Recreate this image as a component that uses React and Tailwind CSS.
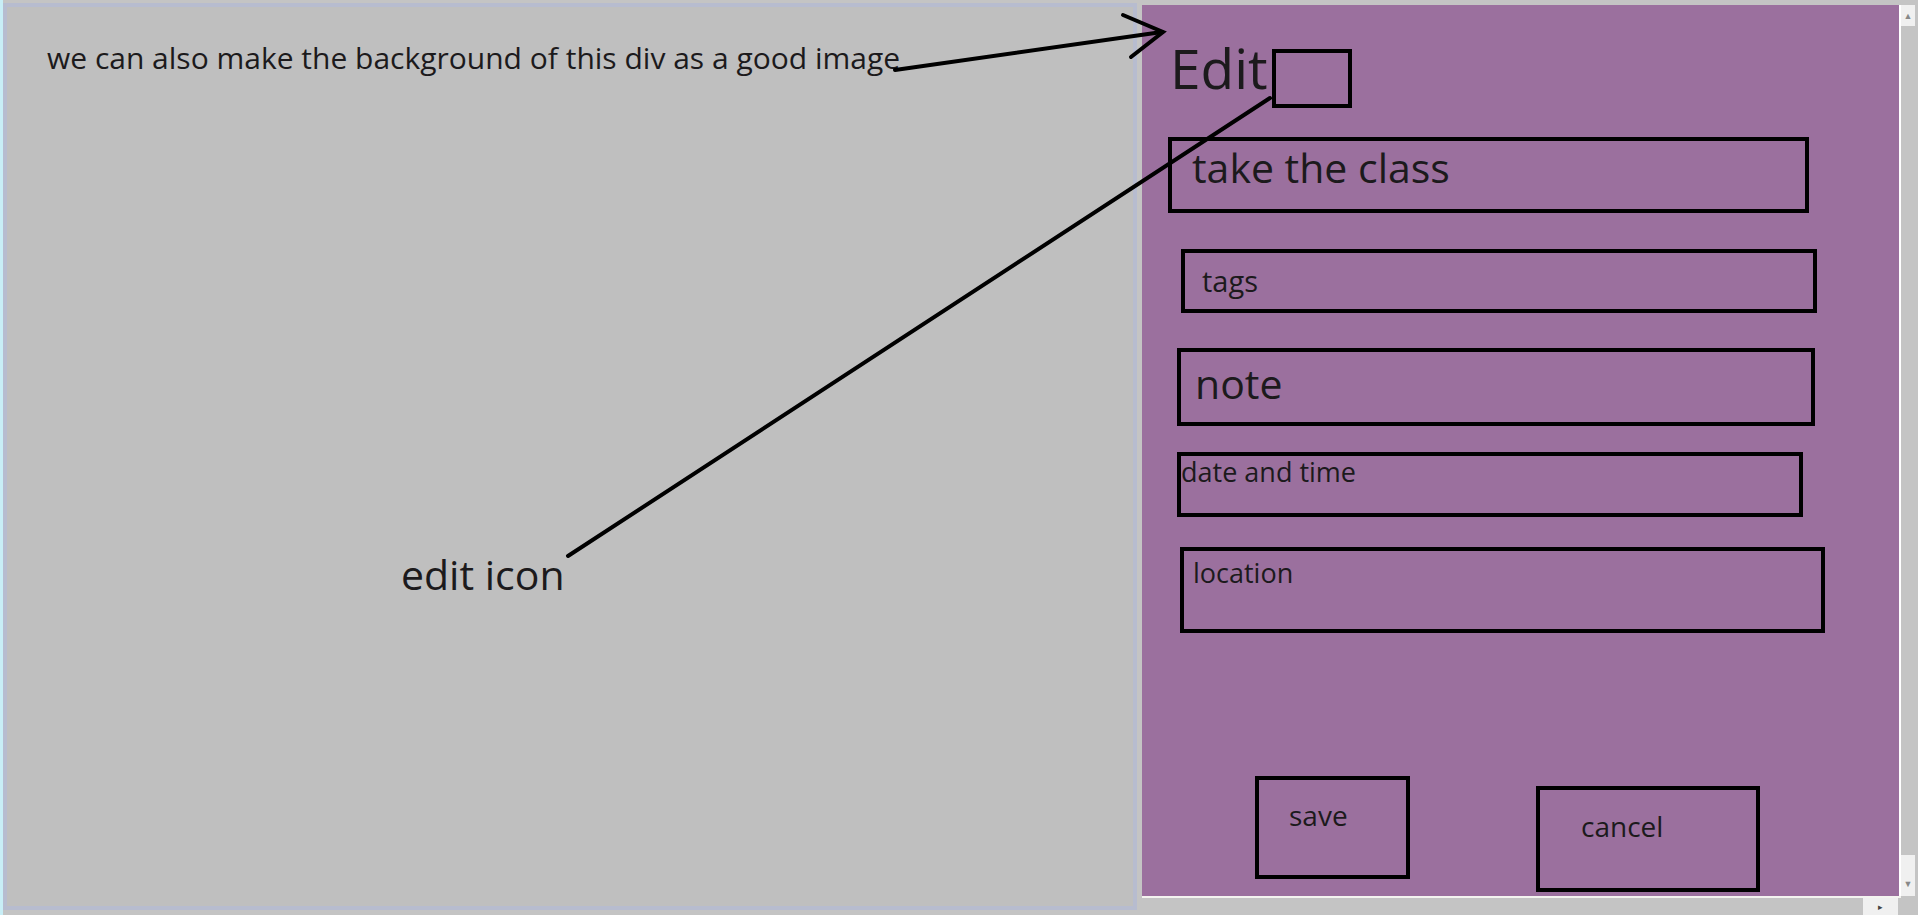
import React from "react";

const Field = ({ box, text, label }) => (
  <div className={box}>
    <span className={text}>{label}</span>
  </div>
);

const App = () => {
  return (
    <div className="relative flex w-[1918px] h-[915px] overflow-hidden bg-[#c4c4c4] font-['Open_Sans',sans-serif] text-[#1c1a1c]">
      {/* left strip of the window frame */}
      <div className="w-[3px] h-full bg-[#c8eef6]" />

      {/* grey side */}
      <div className="mt-[3px] w-[1134px] h-[907px] border-4 border-[#b7bccf] bg-[#bfbfbf] pl-[40px] pt-[36px]">
        <p className="text-[30px] leading-none">
          we can also make the background of this div as a good image
        </p>
        <p className="mt-[481px] ml-[354px] text-[41px] leading-none">edit icon</p>
      </div>

      {/* edit panel with its scrollbars */}
      <div className="ml-[5px] mt-[5px] flex flex-col">
        <div className="flex">
          <div className="w-[757px] h-[891px] bg-[#9b709e] flex flex-col">
            <div className="mt-[35px] ml-[28px] flex items-start">
              <span className="w-[102px] text-[55px] leading-none">Edit</span>
              <div className="mt-[9px] w-[80px] h-[59px] border-4 border-black" />
            </div>

            <Field
              box="mt-[29px] ml-[26px] w-[641px] h-[76px] border-4 border-black pl-[20px] pt-[6px]"
              text="block text-[41px] leading-none"
              label="take the class"
            />
            <Field
              box="mt-[36px] ml-[39px] w-[636px] h-[64px] border-4 border-black pl-[17px] pt-[13px]"
              text="block text-[29px] leading-none"
              label="tags"
            />
            <Field
              box="mt-[35px] ml-[35px] w-[638px] h-[78px] border-4 border-black pl-[14px] pt-[11px]"
              text="block text-[41px] leading-none"
              label="note"
            />
            <Field
              box="mt-[26px] ml-[35px] w-[626px] h-[65px] border-4 border-black pt-[2px]"
              text="block text-[27px] leading-none"
              label="date and time"
            />
            <Field
              box="mt-[30px] ml-[38px] w-[645px] h-[86px] border-4 border-black pl-[9px] pt-[8px]"
              text="block text-[27px] leading-none"
              label="location"
            />

            <div className="mt-[143px] flex items-start">
              <Field
                box="ml-[113px] w-[155px] h-[103px] border-4 border-black pl-[30px] pt-[21px]"
                text="block text-[28px] leading-none"
                label="save"
              />
              <Field
                box="ml-[126px] mt-[10px] w-[224px] h-[106px] border-4 border-black pl-[41px] pt-[22px]"
                text="block text-[28px] leading-none"
                label="cancel"
              />
            </div>
          </div>
          <div className="w-[2px] h-[891px] bg-white" />
          <div className="w-[14px] h-[891px] flex flex-col">
            <div className="h-[21px] bg-[#f0f0f0] flex items-center justify-center text-[9px] text-[#888888]">▲</div>
            <div className="flex-1" />
            <div className="h-[41px] bg-[#f0f0f0] flex items-end justify-center pb-[6px] text-[9px] text-[#888888]">▼</div>
          </div>
        </div>
        <div className="w-[759px] h-[2px] bg-[#f4f4f0]" />
        <div className="h-[17px] flex">
          <div className="ml-[721px] w-[35px] h-full bg-[#f0f0f0] flex items-center justify-center text-[9px] text-[#444444]">▸</div>
        </div>
      </div>

      {/* hand drawn pointers */}
      <svg
        className="absolute top-0 left-0 w-[1918px] h-[915px] pointer-events-none"
        viewBox="0 0 1918 915"
        fill="none"
        stroke="black"
        strokeWidth="4"
        strokeLinecap="round"
      >
        <line x1="895" y1="70" x2="1162" y2="32" />
        <polyline points="1123,15 1163,32 1131,57" strokeLinejoin="miter" />
        <line x1="1270" y1="98" x2="568" y2="556" />
      </svg>
    </div>
  );
};

export default App;
